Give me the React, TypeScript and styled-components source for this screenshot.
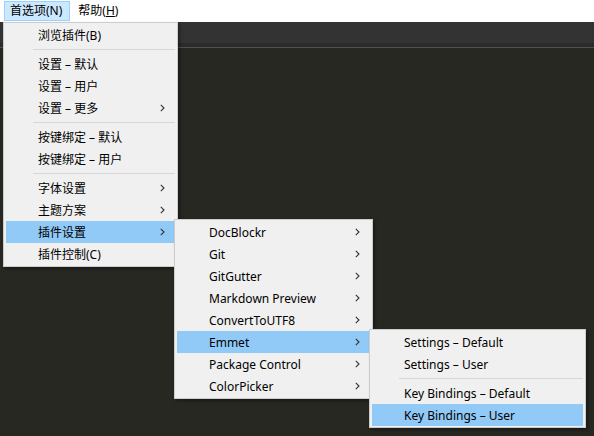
import React from "react";
import styled, { createGlobalStyle } from "styled-components";

const Global = createGlobalStyle`
  html, body { margin: 0; padding: 0; background: #272822; }
  body { font-family: "Noto Sans", "Noto Sans CJK SC", sans-serif; }
`;

const Screen = styled.div`
  position: relative;
  width: 594px;
  height: 436px;
  overflow: hidden;
  display: flex;
  flex-direction: column;
  background: #272822;
  font-size: 12px;
  color: #000;
`;

const MenuBar = styled.div`
  height: 22px;
  background: #fff;
  display: flex;
  align-items: stretch;
  gap: 2px;
  padding: 1px 0 0 4px;
  box-sizing: border-box;
`;

const BarItem = styled.div<{ $open?: boolean }>`
  display: flex;
  align-items: center;
  padding: 0 7px 0 5px;
  height: 20px;
  box-sizing: border-box;
  border: 1px solid ${(p) => (p.$open ? "#99d1ff" : "transparent")};
  background: ${(p) => (p.$open ? "#cce8ff" : "transparent")};
  line-height: 1;
`;

const Key = styled.span`
  text-decoration: underline;
  text-underline-offset: 1px;
`;

const TabStrip = styled.div`
  height: 21px;
  background: #333333;
  border-bottom: 4px solid #2b2b2b;
  box-shadow: 0 1px 0 #505050;
`;

const Editor = styled.div`
  flex: 1;
  margin-top: 1px;
  background: #272822;
`;

const Menu = styled.div<{ $left: number; $top: number; $width: number }>`
  position: absolute;
  left: ${(p) => p.$left}px;
  top: ${(p) => p.$top}px;
  width: ${(p) => p.$width}px;
  box-sizing: border-box;
  background: #f0f0f0;
  border: 1px solid #cccccc;
  padding: 1px 2px 1px 2px;
  box-shadow: 2px 2px 3px rgba(0, 0, 0, 0.35);
  display: flex;
  flex-direction: column;
`;

const Item = styled.div<{ $active?: boolean }>`
  height: 22px;
  display: flex;
  align-items: center;
  padding-left: 32px;
  padding-right: 10px;
  background: ${(p) => (p.$active ? "#91c9f7" : "transparent")};
  white-space: nowrap;
`;

const Label = styled.span`
  flex: 1;
`;

const Arrow = styled.svg`
  width: 5px;
  height: 8px;
  flex: none;
`;

const Separator = styled.div`
  height: 7px;
  display: flex;
  align-items: center;
  padding-left: 27px;
  &::after {
    content: "";
    flex: 1;
    height: 1px;
    background: #d7d7d7;
  }
`;

type Entry =
  | { sep: true }
  | { label: React.ReactNode; sub?: boolean; active?: boolean; sep?: false };

const Chevron = () => (
  <Arrow viewBox="0 0 5 8">
    <path d="M0.8 0.8 L4 4 L0.8 7.2" fill="none" stroke="#333" strokeWidth="1.1" />
  </Arrow>
);

const MenuList = ({ entries }: { entries: Entry[] }) => (
  <>
    {entries.map((e, i) =>
      "sep" in e && e.sep ? (
        <Separator key={i} />
      ) : (
        <Item key={i} $active={(e as any).active}>
          <Label>{(e as any).label}</Label>
          {(e as any).sub && <Chevron />}
        </Item>
      )
    )}
  </>
);

const mainEntries: Entry[] = [
  { label: "浏览插件(B)" },
  { sep: true },
  { label: "设置 – 默认" },
  { label: "设置 – 用户" },
  { label: "设置 – 更多", sub: true },
  { sep: true },
  { label: "按键绑定 – 默认" },
  { label: "按键绑定 – 用户" },
  { sep: true },
  { label: "字体设置", sub: true },
  { label: "主题方案", sub: true },
  { label: "插件设置", sub: true, active: true },
  { label: "插件控制(C)" },
];

const pluginEntries: Entry[] = [
  { label: "DocBlockr", sub: true },
  { label: "Git", sub: true },
  { label: "GitGutter", sub: true },
  { label: "Markdown Preview", sub: true },
  { label: "ConvertToUTF8", sub: true },
  { label: "Emmet", sub: true, active: true },
  { label: "Package Control", sub: true },
  { label: "ColorPicker", sub: true },
];

const emmetEntries: Entry[] = [
  { label: "Settings – Default" },
  { label: "Settings – User" },
  { sep: true },
  { label: "Key Bindings – Default" },
  { label: "Key Bindings – User", active: true },
];

export default function App() {
  return (
    <>
      <Global />
      <Screen>
        <MenuBar>
          <BarItem $open>首选项(N)</BarItem>
          <BarItem>
            帮助(<Key>H</Key>)
          </BarItem>
        </MenuBar>
        <TabStrip />
        <Editor />
        <Menu $left={3} $top={22} $width={175}>
          <MenuList entries={mainEntries} />
        </Menu>
        <Menu $left={174} $top={219} $width={199}>
          <MenuList entries={pluginEntries} />
        </Menu>
        <Menu $left={369} $top={329} $width={217}>
          <MenuList entries={emmetEntries} />
        </Menu>
      </Screen>
    </>
  );
}
